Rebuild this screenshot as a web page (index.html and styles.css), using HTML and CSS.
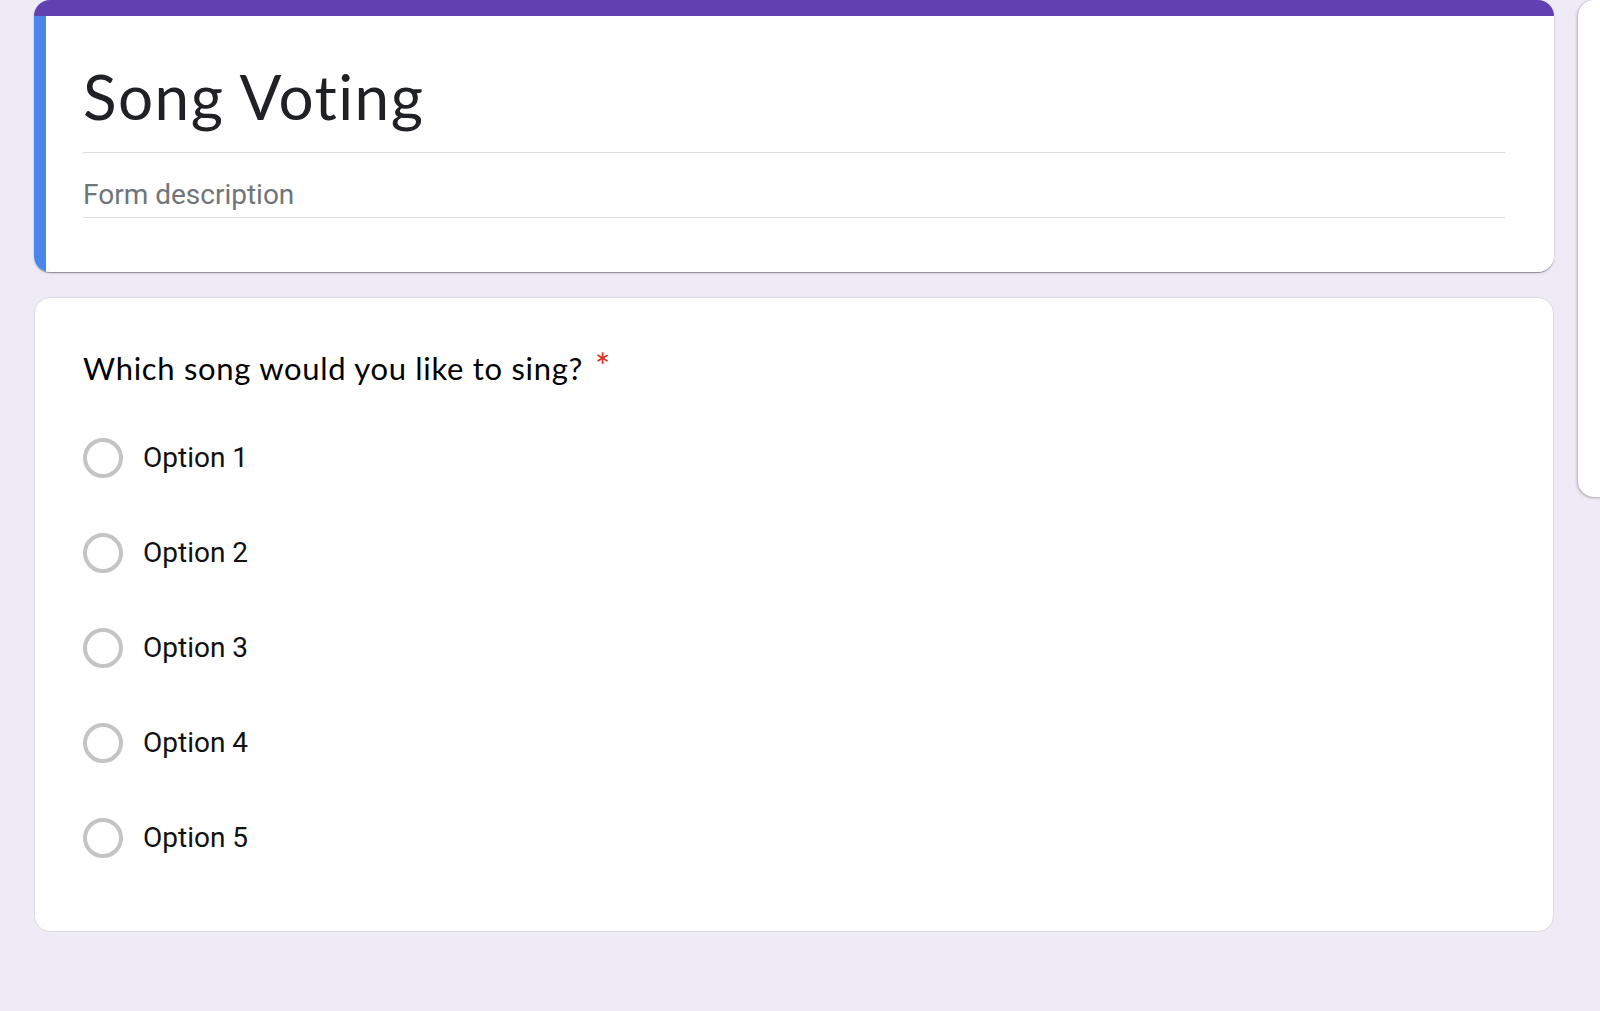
FILE: index.html
```html
<!DOCTYPE html>
<html lang="en">
<head>
<meta charset="utf-8">
<title>Song Voting</title>
<link rel="stylesheet" href="styles.css">
</head>
<body>
<div class="page">
  <main class="column">
    <section class="card header-card">
      <div class="theme-bar"></div>
      <div class="header-body">
        <div class="form-title">Song Voting</div>
        <div class="form-desc">Form description</div>
      </div>
    </section>
    <section class="card question-card">
      <div class="question-title">Which song would you like to sing?<span class="required">*</span></div>
      <div class="options">
        <label class="option"><span class="radio"></span><span class="option-text">Option 1</span></label>
        <label class="option"><span class="radio"></span><span class="option-text">Option 2</span></label>
        <label class="option"><span class="radio"></span><span class="option-text">Option 3</span></label>
        <label class="option"><span class="radio"></span><span class="option-text">Option 4</span></label>
        <label class="option"><span class="radio"></span><span class="option-text">Option 5</span></label>
      </div>
    </section>
  </main>
  <aside class="toolbar"></aside>
</div>
</body>
</html>
```
FILE: styles.css
```css
html, body {
  margin: 0;
  padding: 0;
  height: 100%;
}
body {
  background: #eeebf6;
  overflow: hidden;
  font-family: Roboto, "Liberation Sans", sans-serif;
  color: #202124;
}
.page {
  display: flex;
  align-items: flex-start;
  padding-left: 34px;
  gap: 24px;
}
.column {
  width: 1520px;
  flex-shrink: 0;
  display: flex;
  flex-direction: column;
  gap: 25px;
}
.card {
  background: #fff;
  border-radius: 16px;
}
.header-card {
  overflow: hidden;
  height: 272px;
  box-shadow: 0 2px 1px -1px rgba(0,0,0,.22), 0 1px 1px 0 rgba(0,0,0,.16), 0 1px 3px 0 rgba(0,0,0,.12);
  display: flex;
  flex-direction: column;
}
.theme-bar {
  height: 16px;
  background: #6141b1;
  flex-shrink: 0;
}
.header-body {
  flex: 1;
  border-left: 12px solid #4a86ea;
  padding: 0 49px 0 37px;
}
.form-title {
  font-family: Lato, "Open Sans", sans-serif;
  font-size: 62px;
  line-height: 80px;
  letter-spacing: 1.5px;
  font-variant-ligatures: none;
  font-feature-settings: "liga" 0, "clig" 0;
  padding-top: 40px;
  padding-bottom: 16px;
  border-bottom: 1.5px solid #dadce0;
  color: #202124;
}
.form-desc {
  font-size: 28px;
  line-height: 36px;
  color: #70757a;
  margin-top: 24px;
  padding-bottom: 4px;
  border-bottom: 1.5px solid #dadce0;
}
.question-card {
  border: 1px solid #dadce0;
  padding: 50px 48px 46px 48px;
}
.question-title {
  font-family: Lato, "Open Sans", sans-serif;
  font-size: 31px;
  line-height: 40px;
  letter-spacing: 0.7px;
  font-variant-ligatures: none;
  color: #000;
}
.required {
  color: #d93025;
  margin-left: 12px;
  font-size: 36px;
  line-height: 36px;
  vertical-align: top;
}
.options {
  margin-top: 22px;
  display: flex;
  flex-direction: column;
}
.option {
  height: 95px;
  display: flex;
  align-items: center;
  gap: 20px;
}
.radio {
  width: 32px;
  height: 32px;
  border: 4px solid #c4c4c4;
  border-radius: 50%;
  flex-shrink: 0;
}
.option-text {
  font-size: 28px;
  line-height: 36px;
  color: #111;
  padding-top: 1px;
}
.toolbar {
  width: 60px;
  height: 497px;
  flex-shrink: 0;
  background: #fff;
  border-radius: 16px;
  box-shadow: -1px 1px 3px rgba(0,0,0,.25), 0 0 1px rgba(0,0,0,.2);
}
```
